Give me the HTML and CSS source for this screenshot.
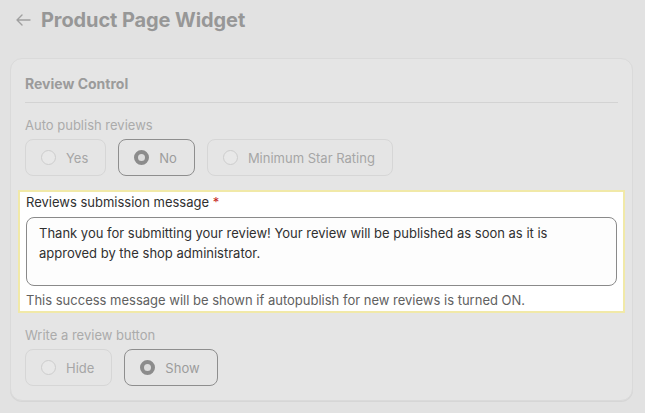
FILE: index.html
```html
<!DOCTYPE html>
<html lang="en">
<head>
<meta charset="utf-8">
<title>Product Page Widget</title>
<link rel="stylesheet" href="styles.css">
</head>
<body>
<header class="page-header">
  <svg class="back" width="16" height="14" viewBox="0 0 16 14" aria-hidden="true">
    <path d="M15 7H2M7 2L2 7l5 5" fill="none" stroke="currentColor" stroke-width="1.4" stroke-linecap="round" stroke-linejoin="round"/>
  </svg>
  <h1 class="page-title">Product Page Widget</h1>
</header>
<main class="card">
  <h2 class="card-title">Review Control</h2>
  <hr class="divider">
  <div class="field dim">
    <div class="field-label">Auto publish reviews</div>
    <div class="choices">
      <div class="choice"><span class="radio"></span>Yes</div>
      <div class="choice selected"><span class="radio on"></span>No</div>
      <div class="choice"><span class="radio"></span>Minimum Star Rating</div>
    </div>
  </div>
  <div class="highlight">
    <div class="hl-label">Reviews submission message <span class="req">*</span></div>
    <div class="textarea">Thank you for submitting your review! Your review will be published as soon as it is approved by the shop administrator.</div>
    <div class="help">This success message will be shown if autopublish for new reviews is turned ON.</div>
  </div>
  <div class="field dim">
    <div class="field-label">Write a review button</div>
    <div class="choices">
      <div class="choice"><span class="radio"></span>Hide</div>
      <div class="choice selected"><span class="radio on"></span>Show</div>
    </div>
  </div>
</main>
</body>
</html>
```

FILE: styles.css
```css
* { box-sizing: border-box; }
html, body { margin: 0; padding: 0; }
body {
  background: #e2e2e2;
  font-family: Inter, "Noto Sans", "Liberation Sans", sans-serif;
  font-size: 13px;
  line-height: 20px;
  color: #303030;
  width: 645px;
  height: 413px;
  overflow: hidden;
}
.page-header {
  display: flex;
  align-items: center;
  height: 39px;
  padding: 0 0 0 15px;
  gap: 10px;
  color: #9a9a9a;
}
.back { color: #a0a0a0; margin-top: 1px; }
.page-title {
  margin: 0;
  font-size: 20px;
  font-weight: 700;
  line-height: 24px;
  color: #979797;
  letter-spacing: -0.1px;
}
.card {
  margin: 19px 12px 0 10px;
  background: #e5e5e5;
  border: 1px solid #dadada;
  border-radius: 12px;
  padding: 15px 14px 14px;
  box-shadow: 0 1px 0 #d6d6d6;
  display: flex;
  flex-direction: column;
}
.card-title {
  margin: 0;
  font-size: 14px;
  font-weight: 700;
  line-height: 20px;
  color: #9b9b9b;
}
.divider {
  margin: 8px 0 0;
  border: 0;
  border-top: 1px solid #d3d3d3;
  height: 0;
}
.field { display: flex; flex-direction: column; gap: 4px; }
.field:first-of-type { margin-top: 12px; }
.field-label { color: #ababab; }
.choices { display: flex; gap: 12px; }
.choice {
  display: flex;
  align-items: center;
  gap: 10px;
  height: 37px;
  padding: 0 17px 0 15px;
  border: 1px solid #d6d6d6;
  border-radius: 8px;
  color: #a6a6a6;
}
.choice.selected {
  border-color: #8e8e8e;
  color: #9c9c9c;
}
.radio {
  width: 15px;
  height: 15px;
  border-radius: 50%;
  border: 1px solid #cdcdcd;
  background: #e8e8e8;
  flex: none;
}
.radio.on {
  border: 4px solid #8c8c8c;
  background: #dcdcdc;
}
.highlight {
  margin: 14px -7px 0;
  padding: 0 6px 1px;
  background: #ffffff;
  border: 2px solid #f1e9a8;
  display: flex;
  flex-direction: column;
}
.hl-label { color: #303030; }
.req { color: #c5281c; }
.textarea {
  margin-top: 5px;
  height: 69px;
  border: 1px solid #8a8a8a;
  border-radius: 8px;
  padding: 5px 12px;
  color: #303030;
  background: #fdfdfd;
}
.help { margin-top: 4px; color: #616161; }
.highlight + .field { margin-top: 12px; }
```
